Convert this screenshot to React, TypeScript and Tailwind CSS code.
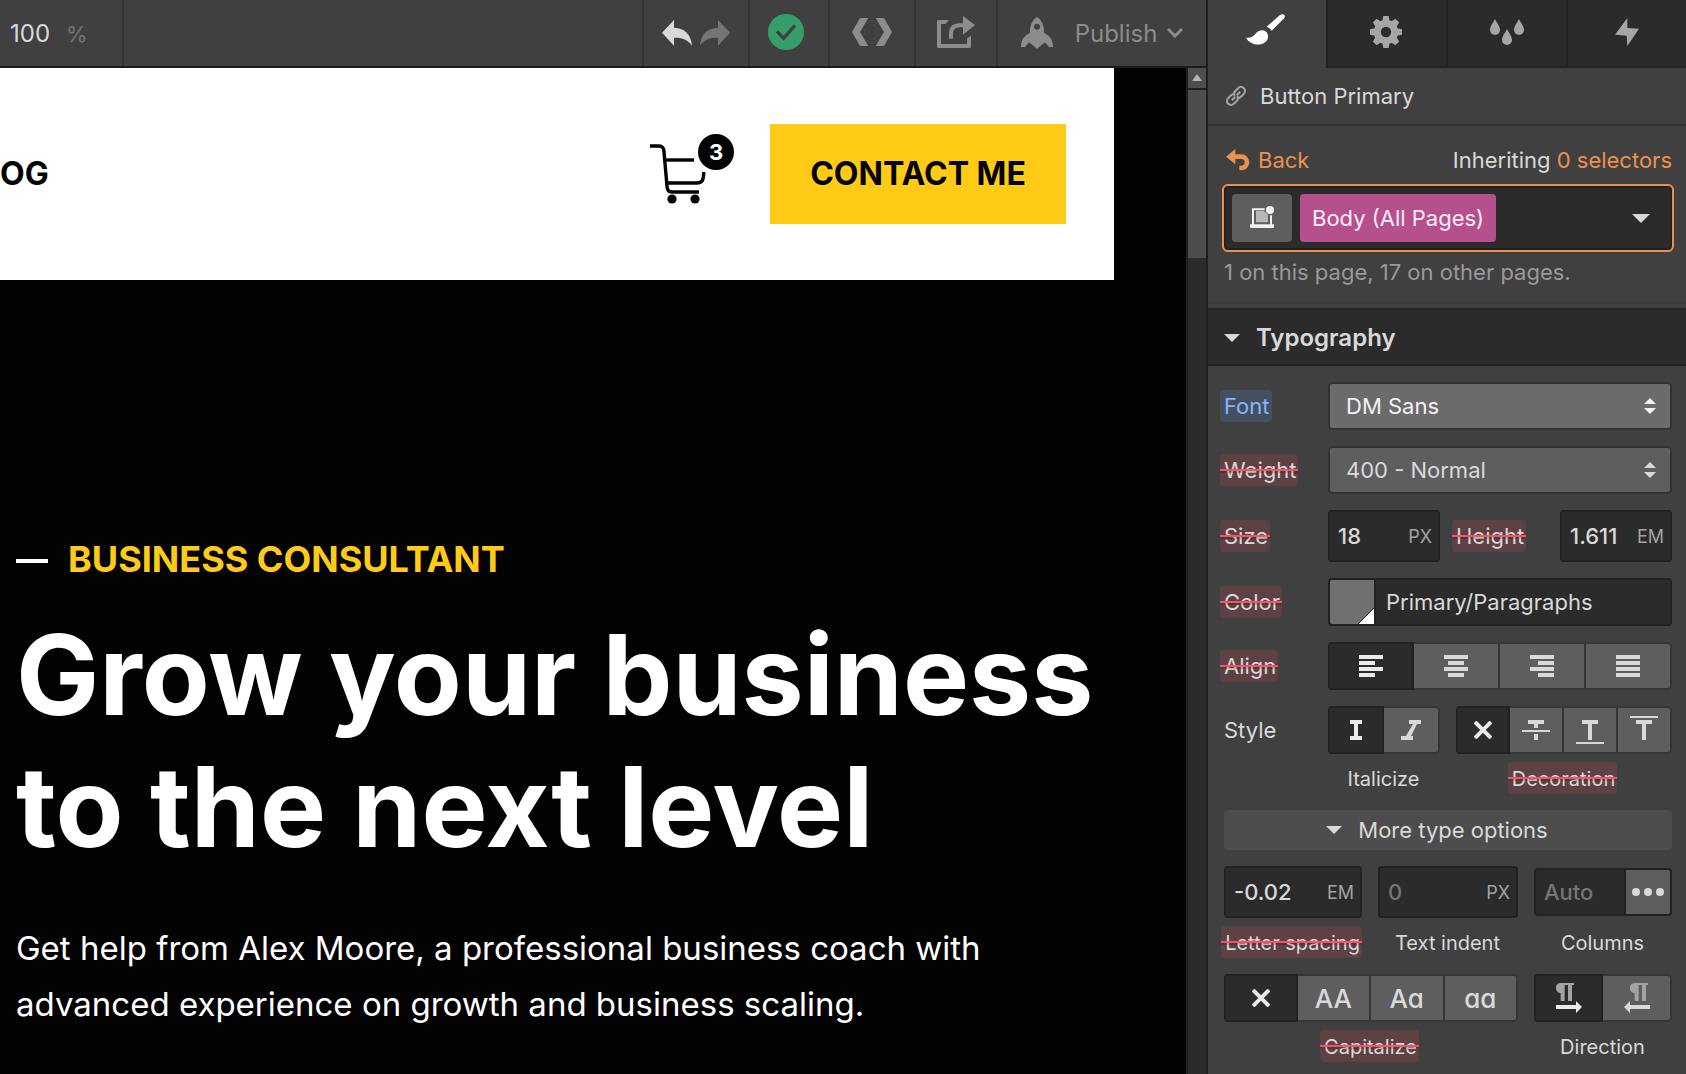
import type { ReactNode } from "react";

/* ---------- Icons ---------- */

function Svg({ w, h, box, children, className }: { w: number; h: number; box: string; children: ReactNode; className?: string }) {
  return (
    <svg width={w} height={h} viewBox={box} className={className ?? "shrink-0"} fill="currentColor" aria-hidden="true">
      {children}
    </svg>
  );
}

const UndoIcon = () => (
  <Svg w={30} h={26} box="0 0 90 78">
    <path d="M0 38 36 0V23C70 24 88 46 90 77 78 59 60 52 36 53V77Z" />
  </Svg>
);
const RedoIcon = () => (
  <Svg w={30} h={26} box="0 0 90 78">
    <path d="M90 38 54 0V23C20 24 2 46 0 77 12 59 30 52 54 53V77Z" />
  </Svg>
);
const CheckIcon = () => (
  <Svg w={36} h={36} box="0 0 108 108">
    <circle cx="54" cy="54" r="54" fill="#369e6b" />
    <path d="M27 52 47 73 81 34" fill="none" stroke="#404040" strokeWidth="10" />
  </Svg>
);
const CodeIcon = () => (
  <Svg w={40} h={28} box="0 0 120 84">
    <path d="M24 0H49L24 42 49 84H24L0 42ZM96 0H71L96 42 71 84H96L120 42Z" />
  </Svg>
);
const ShareIcon = () => (
  <Svg w={38} h={32} box="0 0 114 96">
    <path d="M4 12H36L25 24H12V84H90V67L102 59V92Q102 96 98 96H4Q0 96 0 92V16Q0 12 4 12Z" />
    <path d="M42 68V54Q42 28 68 28H82" fill="none" stroke="currentColor" strokeWidth="12" />
    <path d="M78 0 114 27 78 56Z" />
  </Svg>
);
const RocketIcon = () => (
  <Svg w={32} h={32} box="0 0 96 96">
    <path
      fillRule="evenodd"
      d="M48 0C62 10 70 25 69 48 86 56 96 68 96 90H84L72 76 61 84 48 96 35 84 24 76 12 90H0C0 68 10 56 27 48 26 25 34 10 48 0ZM48 20A9 9 0 1 0 48 38 9 9 0 1 0 48 20Z"
    />
  </Svg>
);
const ChevronIcon = () => (
  <Svg w={16} h={10} box="0 0 16 10">
    <path d="M1 1 8 8 15 1" fill="none" stroke="currentColor" strokeWidth="3" />
  </Svg>
);
const BrushIcon = () => (
  <Svg w={39} h={31} box="0 0 117 93">
    <path d="M0 71C14 73 23 67 30 58 39 46 55 46 62 55 70 66 66 80 54 87 36 97 10 90 0 71Z" />
    <path d="M62 38 102 3C111-3 121 2 115 12L77 50Q72 41 62 38Z" />
  </Svg>
);
const GearIcon = () => (
  <Svg w={32} h={32} box="-48 -48 96 96">
    <circle r="26" fill="none" stroke="currentColor" strokeWidth="21" />
    {[0, 45, 90, 135, 180, 225, 270, 315].map((a) => (
      <path key={a} d="M-11-32-8-48H8L11-32Z" transform={`rotate(${a})`} />
    ))}
  </Svg>
);
const DropsIcon = () => (
  <Svg w={34} h={26} box="0 0 102 78">
    <path d="M15 0C21 12 30 22 30 33A15 15 0 0 1 0 33C0 22 9 12 15 0Z" />
    <path d="M51 30C57 42 66 52 66 63A15 15 0 0 1 36 63C36 52 45 42 51 30Z" />
    <path d="M87 0C93 12 102 22 102 33A15 15 0 0 1 72 33C72 22 81 12 87 0Z" />
  </Svg>
);
const BoltIcon = () => (
  <Svg w={24} h={28} box="0 0 72 84">
    <path d="M37 0 0 50 35 53 37 84 72 32 37 30Z" />
  </Svg>
);
const LinkIcon = () => (
  <Svg w={20} h={20} box="-10 -10 20 20">
    <g transform="rotate(-45)" fill="none" stroke="currentColor" strokeWidth="2">
      <path d="M0-3Q-1-4-3-4H-7A4 4 0 0 0-7 4H-3Q0 4 1 1" />
      <path d="M0 3Q1 4 3 4H7A4 4 0 0 0 7-4H3Q0-4-1-1" />
      <path d="M-6 0H-1M1 0H6" />
    </g>
  </Svg>
);
const BackIcon = () => (
  <Svg w={24} h={22} box="0 0 72 66">
    <path d="M0 23 28 0V46Z" />
    <path d="M24 23H46A17 17 0 0 1 46 57H40" fill="none" stroke="currentColor" strokeWidth="14" />
  </Svg>
);
const DeviceIcon = () => (
  <Svg w={24} h={22} box="0 0 72 66">
    <path d="M18 15H42L54 26V49H18Z" fill="#b8b8b8" />
    <path d="M9 57V10H44M63 28V57" fill="none" stroke="currentColor" strokeWidth="6" />
    <path d="M0 55H72V62Q72 66 68 66H4Q0 66 0 62Z" />
    <circle cx="60" cy="12" r="12" />
  </Svg>
);
const CaretIcon = ({ size = 16 }: { size?: number }) => (
  <Svg w={size} h={size / 2} box="0 0 16 8">
    <path d="M0 0H16L8 8Z" />
  </Svg>
);
const AlignIcon = ({ x, short }: { x: number; short: number }) => (
  <Svg w={24} h={22} box="0 0 24 22">
    <path d="M0 0H24V4H0ZM0 12H24V16H0Z" />
    <rect x={x} y="6" width={short} height="4" />
    <rect x={x} y="18" width={short} height="4" />
  </Svg>
);
const RomanIcon = () => (
  <Svg w={12} h={20} box="0 0 12 20">
    <path d="M0 0H12V4H8V16H12V20H0V16H4V4H0Z" />
  </Svg>
);
const ItalicIcon = () => (
  <Svg w={20} h={20} box="0 0 20 20">
    <path d="M8 0H20V4H16L10 16H12V20H0V16H5L12 4H8Z" />
  </Svg>
);
const CrossIcon = () => (
  <Svg w={18} h={18} box="0 0 18 18">
    <path d="M1 1 17 17M17 1 1 17" stroke="currentColor" strokeWidth="4" />
  </Svg>
);
const StrikeIcon = () => (
  <Svg w={28} h={28} box="0 0 28 28">
    <path d="M6 4H22V8H16V12H12V8H6ZM0 14H28V16H0ZM12 18H16V24H12Z" />
  </Svg>
);
const UnderlineIcon = () => (
  <Svg w={28} h={28} box="0 0 28 28">
    <path d="M6 4H22V8H16V24H12V8H6ZM0 26H28V28H0Z" />
  </Svg>
);
const OverlineIcon = () => (
  <Svg w={28} h={28} box="0 0 28 28">
    <path d="M6 4H22V8H16V24H12V8H6ZM0 0H28V2H0Z" />
  </Svg>
);
const DotsIcon = () => (
  <Svg w={32} h={8} box="0 0 32 8">
    <circle cx="4" cy="4" r="4" />
    <circle cx="16" cy="4" r="4" />
    <circle cx="28" cy="4" r="4" />
  </Svg>
);
const DirectionIcon = ({ flip }: { flip?: boolean }) => (
  <Svg w={26} h={30} box="0 0 78 90">
    <path fill="#a3a3a3" transform={flip ? "translate(18)" : undefined} d="M15 0H54V6H48V54H36V6H26V54H14V30A15 15 0 0 1 15 0Z" />
    <path transform={flip ? "translate(78) scale(-1 1)" : undefined} d="M0 66H60V54L78 72 60 90V78H0Z" />
  </Svg>
);
const CartIcon = () => (
  <Svg w={56} h={60} box="0 0 56 60">
    <g fill="none" stroke="#030303" strokeWidth="3.4">
      <path d="M0 2H9Q14 2 14 8L17 42Q17 48 22 48H49" />
      <path d="M15 16H44" />
      <path d="M18 39H46Q52 39 53 35L54 28" />
    </g>
    <circle cx="22" cy="55" r="4.6" fill="#030303" />
    <circle cx="45" cy="55" r="4.6" fill="#030303" />
  </Svg>
);

/* ---------- Top bar and canvas ---------- */

function TopBar() {
  const cell = "flex h-full items-center justify-center border-l-2 border-[#333]";
  return (
    <header className="flex h-[68px] items-center border-b-2 border-[#1c1c1c] bg-[#404040] text-[24px] text-[#8c8c8c]">
      <div className="flex h-full w-[124px] items-center gap-4 border-r-2 border-[#333] pt-[2px] pl-[10px]">
        <span className="text-[#d9d9d9]">100</span>
        <span className="text-[22px] text-[#757575]">%</span>
      </div>
      <div className="ml-auto flex h-full">
        <div className={`${cell} w-[106px] gap-2`}>
          <button aria-label="Undo" className="text-[#d9d9d9]"><UndoIcon /></button>
          <button aria-label="Redo" className="text-[#757575]"><RedoIcon /></button>
        </div>
        <button aria-label="Saved" className={`${cell} w-20 pr-[6px] pb-[2px]`}><CheckIcon /></button>
        <button aria-label="Export code" className={`${cell} w-[86px] pb-[2px]`}><CodeIcon /></button>
        <button aria-label="Share" className={`${cell} w-[82px] pb-[2px]`}><ShareIcon /></button>
        <button className={`${cell} w-[210px]`}>
          <RocketIcon />
          <span className="mr-[10px] ml-[22px] pt-[2px]">Publish</span>
          <ChevronIcon />
        </button>
      </div>
    </header>
  );
}

function Canvas() {
  return (
    <div className="flex flex-1 overflow-hidden bg-[#030303]">
      <div className="min-w-0 flex-1">
        <div className="mr-[72px] flex h-[212px] items-center bg-white pr-12 text-[#030303]">
          <a href="#blog" className="text-[32px] font-bold">OG</a>
          <a href="#cart" aria-label="Cart, 3 items" className="relative mr-9 ml-auto flex w-[84px]">
            <CartIcon />
            <span className="absolute -top-[10px] right-0 flex size-9 items-center justify-center rounded-full bg-[#030303] text-[22px] font-bold text-white">
              3
            </span>
          </a>
          <button className="h-[100px] w-[296px] bg-[#ffcb17] text-[32px] font-bold">CONTACT ME</button>
        </div>
        <main className="pt-[255px] pl-4 text-white">
          <p className="flex items-center gap-5 text-[36px] leading-[48px] font-bold text-[#ffcb17]">
            <span className="mt-1 h-1 w-8 bg-white" />
            BUSINESS CONSULTANT
          </p>
          <h1 className="mt-[26px] text-[111px] leading-[132px] font-bold whitespace-nowrap">
            Grow your business
            <br />
            to the next level
          </h1>
          <p className="mt-[47px] text-[33px] leading-[56px] whitespace-nowrap">
            Get help from Alex Moore, a professional business coach with
            <br />
            advanced experience on growth and business scaling.
          </p>
        </main>
      </div>
      <div className="flex w-5 shrink-0 flex-col border-l-2 border-[#1f1f1f] bg-[#2b2b2b]">
        <button aria-label="Scroll up" className="flex h-[22px] items-center justify-center border-b-2 border-[#1f1f1f] bg-[#4d4d4d] pb-[2px] text-[#b3b3b3]">
          <Svg w={10} h={7} box="0 0 10 7"><path d="M5 0 10 7H0Z" /></Svg>
        </button>
        <div className="h-[168px] bg-[#4d4d4d]" />
      </div>
    </div>
  );
}

/* ---------- Style panel ---------- */

function Label({ children, htmlFor, tone = "plain", small }: { children: string; htmlFor?: string; tone?: "plain" | "blue" | "red"; small?: boolean }) {
  const tones = {
    plain: "text-[#d9d9d9]",
    blue: "bg-[#445060] text-[#82b8ff]",
    red: "bg-[#5d4144] text-[#d9d9d9]",
  };
  return (
    <label
      htmlFor={htmlFor}
      className={`relative inline-flex h-8 items-center rounded pr-[2px] pl-1 whitespace-nowrap ${small ? "pt-[2px] text-[20px]" : "-ml-1 text-[22px]"} ${tones[tone]}`}
    >
      {children}
      {tone === "red" && <span className="absolute inset-x-0 top-[15px] h-[2px] bg-[#ff4d62] shadow-[0_2px_0_rgba(0,0,0,0.15)]" />}
    </label>
  );
}

function Caption({ children }: { children: ReactNode }) {
  return <div className="flex justify-center pr-[3px]">{children}</div>;
}

function Row({ label, children }: { label: ReactNode; children: ReactNode }) {
  return (
    <div className="grid grid-cols-[104px_1fr] items-center">
      <div className="flex">{label}</div>
      {children}
    </div>
  );
}

function Select({ id, value, hot }: { id: string; value: string; hot?: boolean }) {
  return (
    <div className="relative">
      <select
        id={id}
        className={`block h-12 w-full appearance-none rounded border-2 border-[#333] pl-4 text-[22px] ${hot ? "bg-[#6b6b6b] text-[#f2f2f2]" : "bg-[#5e5e5e] text-[#d9d9d9]"}`}
      >
        <option>{value}</option>
      </select>
      <Svg w={12} h={16} box="0 0 12 16" className={`pointer-events-none absolute top-4 right-4 ${hot ? "text-[#f2f2f2]" : "text-[#d9d9d9]"}`}>
        <path d="M0 6 6 0 12 6ZM0 10H12L6 16Z" />
      </Svg>
    </div>
  );
}

function UnitInput({ id, value, placeholder, unit }: { id: string; value?: string; placeholder?: string; unit: string }) {
  return (
    <div className="flex h-[52px] min-w-0 items-center rounded border-2 border-[#212121] bg-[#2b2b2b] pr-[6px] pl-2">
      <input
        id={id}
        defaultValue={value}
        placeholder={placeholder}
        className="w-full min-w-0 flex-1 bg-transparent text-[22px] font-medium text-[#d9d9d9] outline-none placeholder:text-[#757575]"
      />
      <span className="text-[18px] text-[#a3a3a3]">{unit}</span>
    </div>
  );
}

function Segmented({ label, items, className }: { label: string; items: { name: string; icon: ReactNode }[]; className?: string }) {
  return (
    <div role="group" aria-label={label} className={`grid h-12 auto-cols-fr grid-flow-col ${className ?? ""}`}>
      {items.map((item, i) => (
        <button
          key={item.name}
          aria-label={item.name}
          aria-pressed={i === 0}
          className={`flex min-w-0 items-center justify-center border-y-2 border-r-2 text-[26px] font-medium first:rounded-l first:border-l-2 last:rounded-r ${
            i === 0 ? "border-[#212121] bg-[#2b2b2b] text-[#ebebeb]" : "border-[#363636] bg-[#5e5e5e] text-[#d9d9d9]"
          }`}
        >
          {item.icon}
        </button>
      ))}
    </div>
  );
}

function StylePanel() {
  const tab = "flex items-center justify-center";
  const idle = "border-b-2 border-l-2 border-[#212121] bg-[#2b2b2b] pb-[2px] text-[#a6a6a6]";
  const caseText = (s: string) => <span className="[font-feature-settings:'cv11']">{s}</span>;
  return (
    <aside className="w-[480px] shrink-0 border-l-2 border-[#1f1f1f] bg-[#404040] text-[22px] text-[#d9d9d9]">
      <nav className="grid h-[68px] grid-cols-[118px_1fr_1fr_1fr]">
        <button aria-label="Style" className={`${tab} pr-1 pb-[10px] text-white`}><BrushIcon /></button>
        <button aria-label="Settings" className={`${tab} ${idle} pr-[2px]`}><GearIcon /></button>
        <button aria-label="Style manager" className={`${tab} ${idle}`}><DropsIcon /></button>
        <button aria-label="Interactions" className={`${tab} ${idle}`}><BoltIcon /></button>
      </nav>

      <div className="flex h-[58px] items-center gap-[14px] border-b-2 border-[#333] pl-[18px]">
        <span className="text-[#a6a6a6]"><LinkIcon /></span>
        <h2>Button Primary</h2>
      </div>

      <section className="border-b-2 border-[#383838] pr-3 pl-[14px]">
        <div className="flex h-[58px] items-center justify-between pt-[10px] pr-[2px] pl-1">
          <button className="flex items-center gap-2 text-[#eb914f]"><BackIcon />Back</button>
          <p>Inheriting <a href="#selectors" className="text-[#eb914f]">0 selectors</a></p>
        </div>
        <div className="flex h-[68px] items-center gap-2 rounded-md border-2 border-[#eb914f] bg-[#2b2b2b] pr-[22px] pl-2 ring-2 ring-[#212121] ring-inset">
          <button aria-label="Breakpoint" className="flex h-12 w-15 items-center justify-center rounded bg-[#5e5e5e] pb-[2px] text-[#f2f2f2]"><DeviceIcon /></button>
          <button className="h-12 rounded bg-[#b5508c] px-3 text-[#ffecf7]">Body (All Pages)</button>
          <button aria-label="Choose selector" className="ml-auto"><CaretIcon size={18} /></button>
        </div>
        <p className="h-[50px] pt-[3px] pl-[2px] leading-[34px] text-[#999]">1 on this page, 17 on other pages.</p>
      </section>

      <button className="mt-1 flex h-[58px] w-full items-center gap-4 border-y-2 border-[#212121] bg-[#2b2b2b] pt-[2px] pl-4 text-[24px] font-semibold">
        <CaretIcon />
        Typography
      </button>

      <div className="flex flex-col gap-4 pt-4 pr-[14px] pb-3 pl-4">
        <Row label={<Label htmlFor="font" tone="blue">Font</Label>}>
          <Select id="font" value="DM Sans" hot />
        </Row>
        <Row label={<Label htmlFor="weight" tone="red">Weight</Label>}>
          <Select id="weight" value="400 - Normal" />
        </Row>
        <Row label={<Label htmlFor="size" tone="red">Size</Label>}>
          <div className="grid grid-cols-[112px_1fr_112px] items-center">
            <UnitInput id="size" value="18" unit="PX" />
            <div className="flex pl-4"><Label htmlFor="height" tone="red">Height</Label></div>
            <UnitInput id="height" value="1.611" unit="EM" />
          </div>
        </Row>
        <Row label={<Label htmlFor="color" tone="red">Color</Label>}>
          <div className="flex h-12 overflow-hidden rounded border-2 border-[#212121] bg-[#2b2b2b]">
            <button aria-label="Pick colour" className="flex w-[46px] shrink-0 items-end justify-end border-r-2 border-[#212121] bg-[#707070] text-white">
              <Svg w={16} h={16} box="0 0 16 16">
                <path d="M0 16 16 0V16Z" />
                <path d="M0 16 16 0" stroke="#212121" strokeWidth="1" />
              </Svg>
            </button>
            <input id="color" defaultValue="Primary/Paragraphs" className="w-full min-w-0 bg-transparent pl-[10px] outline-none" />
          </div>
        </Row>
        <Row label={<Label tone="red">Align</Label>}>
          <Segmented
            label="Align"
            items={[
              { name: "Left", icon: <AlignIcon x={0} short={16} /> },
              { name: "Center", icon: <AlignIcon x={4} short={16} /> },
              { name: "Right", icon: <AlignIcon x={8} short={16} /> },
              { name: "Justify", icon: <AlignIcon x={0} short={24} /> },
            ]}
          />
        </Row>
        <div className="grid grid-cols-[104px_112px_1fr] items-center gap-y-2">
          <div className="flex"><Label>Style</Label></div>
          <Segmented label="Italicize" items={[{ name: "Regular", icon: <RomanIcon /> }, { name: "Italic", icon: <ItalicIcon /> }]} />
          <Segmented
            label="Decoration"
            className="ml-4"
            items={[
              { name: "None", icon: <CrossIcon /> },
              { name: "Strikethrough", icon: <StrikeIcon /> },
              { name: "Underline", icon: <UnderlineIcon /> },
              { name: "Overline", icon: <OverlineIcon /> },
            ]}
          />
          <div className="col-start-2"><Caption><Label small>Italicize</Label></Caption></div>
          <div className="pl-4"><Caption><Label small tone="red">Decoration</Label></Caption></div>
        </div>
        <button className="flex h-10 items-center justify-center gap-4 rounded bg-[#4d4d4d] pr-[22px]">
          <CaretIcon />
          More type options
        </button>
        <div className="grid grid-cols-[138px_1fr_138px] items-center gap-x-4 gap-y-2">
          <UnitInput id="spacing" value="-0.02" unit="EM" />
          <UnitInput id="indent" placeholder="0" unit="PX" />
          <div className="flex h-12 overflow-hidden rounded border-2 border-[#212121] bg-[#2b2b2b]">
            <input id="columns" placeholder="Auto" className="w-full min-w-0 flex-1 bg-transparent pl-2 font-medium outline-none placeholder:text-[#757575]" />
            <button aria-label="Column settings" className="flex w-[46px] items-center justify-center border-l-2 border-[#212121] bg-[#5e5e5e]"><DotsIcon /></button>
          </div>
          <Caption><Label small htmlFor="spacing" tone="red">Letter spacing</Label></Caption>
          <Caption><Label small htmlFor="indent">Text indent</Label></Caption>
          <Caption><Label small htmlFor="columns">Columns</Label></Caption>
        </div>
        <div className="grid grid-cols-[1fr_138px] items-center gap-x-4 gap-y-2">
          <Segmented
            label="Capitalize"
            items={[
              { name: "None", icon: <CrossIcon /> },
              { name: "AA", icon: caseText("AA") },
              { name: "Aa", icon: caseText("Aa") },
              { name: "aa", icon: caseText("aa") },
            ]}
          />
          <Segmented label="Direction" items={[{ name: "Left to right", icon: <DirectionIcon /> }, { name: "Right to left", icon: <DirectionIcon flip /> }]} />
          <Caption><Label small tone="red">Capitalize</Label></Caption>
          <Caption><Label small>Direction</Label></Caption>
        </div>
      </div>
    </aside>
  );
}

export default function App() {
  return (
    <div className="flex min-h-screen bg-[#030303] font-['Inter',sans-serif]">
      <div className="flex min-w-0 flex-1 flex-col">
        <TopBar />
        <Canvas />
      </div>
      <StylePanel />
    </div>
  );
}
